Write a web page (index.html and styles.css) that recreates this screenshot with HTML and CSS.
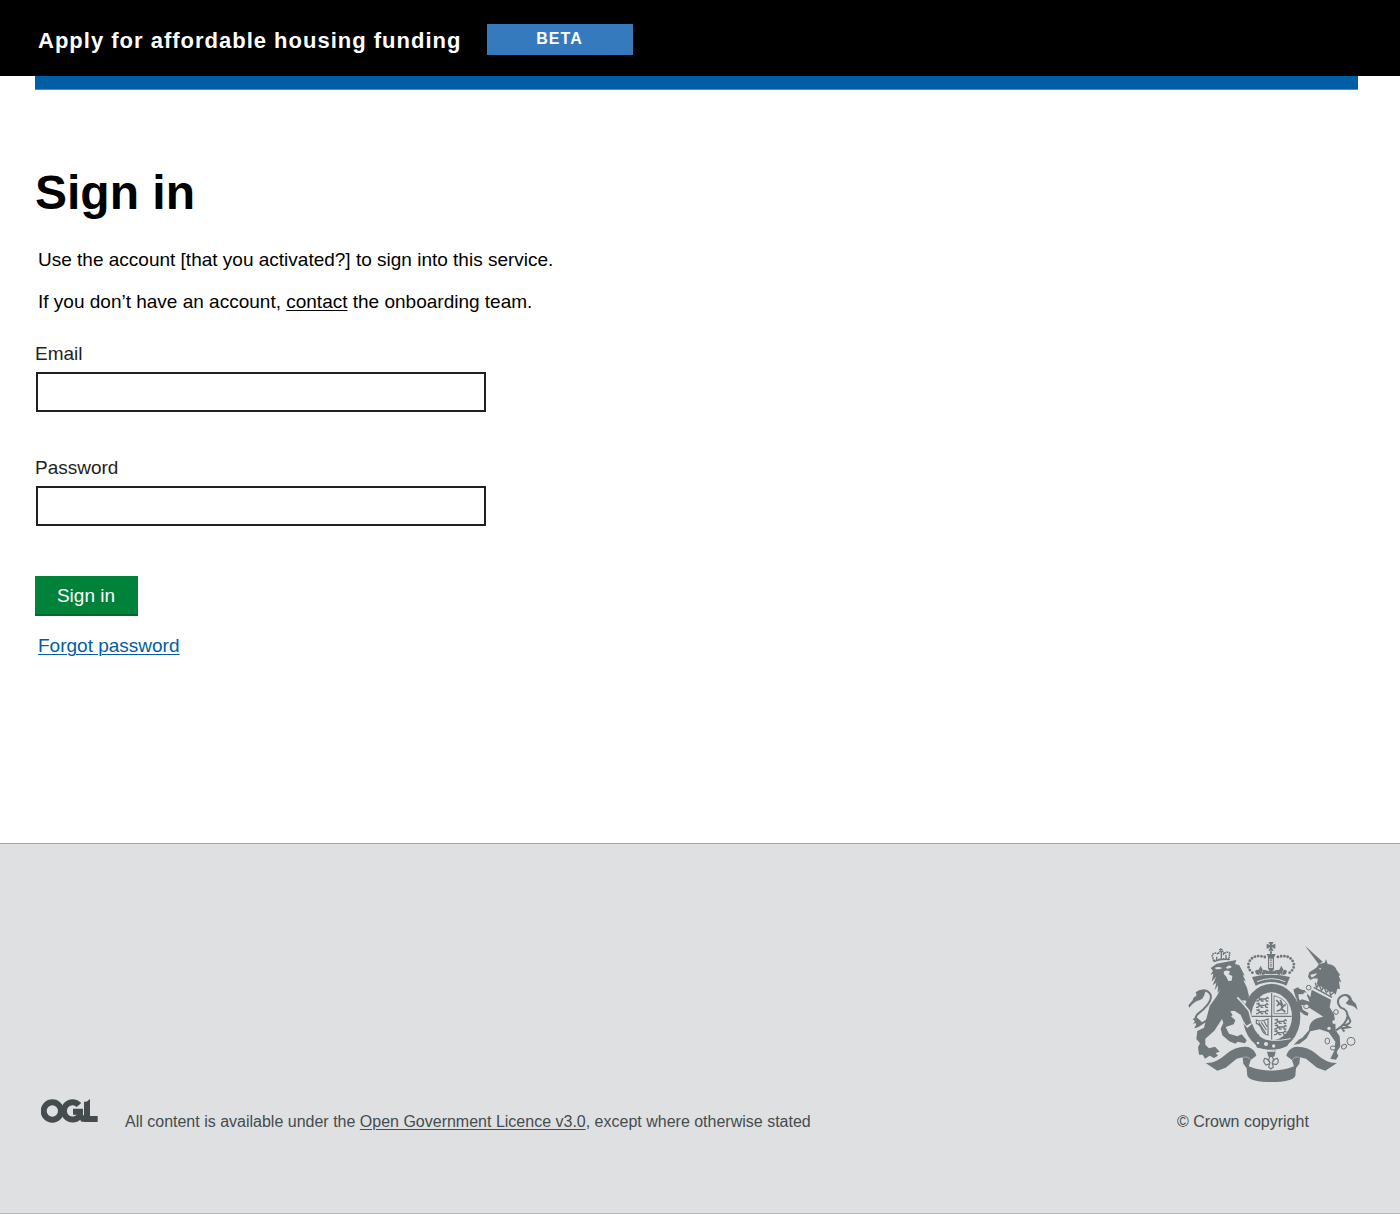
FILE: index.html
```html
<!DOCTYPE html>
<html lang="en">
<head>
<meta charset="utf-8">
<title>Sign in – Apply for affordable housing funding</title>
<link rel="stylesheet" href="styles.css">
</head>
<body>
<header class="header">
  <span class="service">Apply for affordable housing funding</span>
  <span class="phase">BETA</span>
</header>
<div class="header-bar"></div>
<main class="main">
  <h1 class="title">Sign in</h1>
  <p class="text">Use the account [that you activated?] to sign into this service.</p>
  <p class="text text-second">If you don’t have an account, <a class="contact" href="#">contact</a> the onboarding team.</p>
  <form class="form">
    <label class="label" for="email">Email</label>
    <input class="input" id="email" type="text">
    <label class="label" for="password">Password</label>
    <input class="input" id="password" type="password">
    <button class="button" type="button">Sign in</button>
  </form>
  <a class="forgot" href="#">Forgot password</a>
</main>
<footer class="footer">
  <div class="licence">
    <svg class="ogl" viewBox="0 0 171 72" role="img" aria-label="OGL">
      <g fill="none" stroke="#454c4f" stroke-width="18">
        <circle cx="34" cy="36" r="26"/>
        <path d="M114 18A26 26 0 1 0 117 49V38H96"/>
        <path d="M138 8V60H170"/>
      </g>
      <path fill="#454c4f" d="M109 49H129V68H121ZM129 14L147 0V15H129Z"/>
    </svg>
    <p class="small">All content is available under the <a class="ogl-link" href="#">Open Government Licence v3.0</a>, except where otherwise stated</p>
  </div>
  <div class="copyright">
    <svg class="crest" viewBox="0 0 540 465" role="img" aria-label="Royal coat of arms">
      <defs>
        <g id="walker" fill="none" stroke="#6f777b" stroke-width="4">
          <path d="M3 4L10 5L13 9H30L35 4L39 8M13 9L7 15H2M15 10L18 15H24M30 9L32 15H38M12 5L9 1"/>
        </g>
      </defs>
      <!-- garter and shield -->
      <ellipse cx="275" cy="246" rx="86" ry="100" fill="#6f777b"/>
      <ellipse cx="275" cy="244" rx="61" ry="72" fill="#dee0e2"/>
      <path d="M275 174V314M215 244H335" stroke="#6f777b" stroke-width="3.5"/>
      <use href="#walker" x="227" y="183"/><use href="#walker" x="226" y="202"/><use href="#walker" x="226" y="221"/>
      <use href="#walker" x="281" y="250"/><use href="#walker" x="281" y="267"/><use href="#walker" x="280" y="284"/>
      <path d="M282 182V236H323V211Q312 190 282 182" fill="none" stroke="#6f777b" stroke-width="2.5"/>
      <path d="M289 195L298 205L291 213M298 203L308 216L317 208M307 214L303 224L290 229M305 222L316 231M301 195L308 211" fill="none" stroke="#6f777b" stroke-width="5"/>
      <path d="M229 255Q242 262 264 252V300Q251 299 245 283Q241 269 229 265ZM236 262L257 295M244 262L259 285M252 259L261 275" fill="none" stroke="#6f777b" stroke-width="3.5"/>
      <!-- buckle -->
      <path d="M222 318L233 303L242 309L264 316L299 320L332 312L322 333L285 347L257 343L231 338Z" fill="#6f777b"/>
      <path d="M196 304Q207 326 228 339Q262 351 305 342M239 303Q265 325 332 311" fill="none" stroke="#dee0e2" stroke-width="3"/>
      <g fill="#dee0e2"><circle cx="234" cy="324" r="4"/><circle cx="258" cy="327" r="6"/><circle cx="281" cy="333" r="5"/></g>
      <!-- crown -->
      <path d="M216 126Q273 112 330 126L319 152Q274 130 227 152Z" fill="#6f777b"/>
      <path d="M231 140Q274 122 316 140" fill="none" stroke="#dee0e2" stroke-width="3"/>
      <path d="M217 113Q200 99 207 82Q219 55 258 67M329 113Q347 99 340 82Q328 55 289 67" fill="none" stroke="#6f777b" stroke-width="8.5" stroke-linecap="round" stroke-dasharray="0 10"/>
      <path d="M273 64V102" stroke="#6f777b" stroke-width="18"/>
      <path d="M273 71V99" stroke="#dee0e2" stroke-width="11"/>
      <path d="M273 73V97" stroke="#6f777b" stroke-width="4" stroke-dasharray="5 2"/>
      <path d="M265 21H281L275 31L286 26V42L275 36L281 47H265L271 36L260 42V26L271 31ZM260 57H287L283 66H264ZM270 49H276V56H270Z" fill="#6f777b"/>
      <path id="lys" d="M242 92L249 106L242 121L235 106ZM225 108Q235 99 239 111L238 121L228 117ZM259 108Q249 99 245 111L246 121L256 117Z" fill="#6f777b"/>
      <use href="#lys" x="62"/>
      <path d="M264 101H283L277 109L290 105V117L256 117V105L269 109Z" fill="#6f777b"/>
      <!-- lion -->
      <path d="M89 248Q67 268 55 268Q38 258 52 238Q99 203 92 180Q84 164 68 167" fill="none" stroke="#6f777b" stroke-width="6"/>
      <path d="M78 165Q60 160 47 172L50 181Q40 187 38 196L25 211L28 218Q43 199 58 196Q72 190 75 173ZM50 247L37 253L47 257L39 266L51 263L43 280Q57 278 70 265Z" fill="#6f777b"/>
      <path d="M171 185Q195 206 215 268L202 279L183 257L180 234L165 227Z" fill="#dee0e2"/>
      <path d="M92 99L110 86L169 75L165 87L178 91L187 108L194 122L188 119L197 139L190 136L201 158L207 184L202 198L186 195L203 220L213 263L199 271L190 258L182 239L163 227L151 229L158 241L153 244L166 256L161 268L137 276L147 296L172 304L185 298L200 316L195 325L173 320L166 326L148 319L127 301L122 281L130 264L126 252L103 287L76 311L76 329L87 340L105 335L119 350L107 354L114 362L102 369L89 362L75 371L68 359L57 359L54 337L60 325L49 312L52 288L72 278L82 240L89 213L110 184L122 162L113 174L114 151L104 166L109 143L98 151L108 125L95 140L100 116L91 119L99 108Z" fill="#6f777b"/>
      <path d="M104 99Q115 93 127 99Q117 105 108 102M138 97L148 91L156 96Q149 101 141 101M131 110Q140 103 150 110L146 118L157 123L155 137L145 138L139 125L132 118Z" fill="#dee0e2"/>
      <path d="M172 187Q191 206 207 227L218 267" fill="none" stroke="#dee0e2" stroke-width="5"/>
      <path d="M192 253L205 252L214 263L199 272Z" fill="#6f777b"/>
      <path d="M101 78L96 59Q106 50 115 58Q117 48 124 48Q131 48 131 57Q142 48 149 54L147 72Q123 69 101 78" fill="none" stroke="#6f777b" stroke-width="5" stroke-dasharray="5 2"/>
      <path d="M101 80Q123 71 148 74M110 65V74M124 48V72M138 60V70M117 44H128M122 40V46" fill="none" stroke="#6f777b" stroke-width="4"/>
      <!-- unicorn -->
      <path d="M375 32L428 80L416 88Z" fill="#6f777b"/>
      <path d="M384 125L388 112L409 98L417 87L434 83L438 73L443 87Q464 89 470 105L481 121L476 122L484 142L477 139L480 162L472 161L467 179L459 170L448 172L409 153L414 131L402 130L391 135Z" fill="#6f777b"/>
      <path d="M391 119L412 115L407 121L395 128M416 101L424 98L421 104Z" fill="#dee0e2"/>
      <path d="M405 145L464 177L458 190L400 159Z" fill="#dee0e2"/>
      <path d="M401 157L456 187M406 143L410 158L416 148L425 166L431 155L439 172L447 164L452 180L463 171" fill="none" stroke="#6f777b" stroke-width="4"/>
      <path d="M395 164L453 194L449 217L462 238L466 263L467 286L479 304L481 334L470 351L475 363L468 374L451 371L463 347L466 320L446 292L419 283L391 289L380 310L359 326L341 329L356 314L367 308L387 286Q386 251 430 245L395 223L376 211L364 210L369 225L386 236L374 240L357 227L350 202L366 193L389 200L379 177L355 178L358 199L347 187L341 167L350 161L374 166L391 187Z" fill="#6f777b"/>
      <path d="M339 164L353 157L367 167L351 174ZM348 190L361 195L354 204ZM369 225L385 234L383 243L371 238Z" fill="#6f777b"/>
      <path d="M468 286Q502 265 503 241Q502 224 482 218Q467 201 479 187Q499 172 511 190M500 235L511 258Q511 266 495 271L507 277L486 280L493 290" fill="none" stroke="#6f777b" stroke-width="6"/>
      <path d="M495 178Q514 178 516 195L528 207L533 226Q522 211 507 211L497 205L507 193Z" fill="#6f777b"/>
      <!-- chain -->
      <g fill="#dee0e2" stroke="#6f777b" stroke-width="3"><circle cx="386" cy="158" r="7"/><ellipse cx="379" cy="214" rx="8" ry="7"/><circle cx="468" cy="231" r="7"/><ellipse cx="442" cy="318" rx="7" ry="9"/><ellipse cx="459" cy="339" rx="8" ry="6"/><ellipse cx="492" cy="335" rx="8" ry="6" transform="rotate(-35 492 335)"/><circle cx="513" cy="319" r="12"/></g>
      <g fill="#dee0e2"><circle cx="463" cy="261" r="6"/><circle cx="447" cy="280" r="5"/><circle cx="376" cy="178" r="6"/></g>
      <!-- motto ribbon and rose stem -->
      <path id="ribbon" d="M77 384Q107 386 139 357Q169 332 205 336Q224 343 229 362L212 375L206 394Q238 407 275 407V441Q212 441 202 423L200 400L190 386L188 367L170 371L137 398L112 407Z" fill="#6f777b"/>
      <use href="#ribbon" transform="translate(548 0) scale(-1 1)"/>
      <path d="M190 367Q204 363 211 374M358 367Q344 363 337 374" fill="none" stroke="#dee0e2" stroke-width="1.5"/>
      <path d="M261 350H287L283 365H265Z" fill="#6f777b"/>
      <path d="M273 360L281 373L276 384Q283 370 292 370Q299 380 289 389L277 386L280 396L273 402L266 396L269 386L258 390Q247 380 254 370Q263 370 270 384L266 373Z" fill="#dee0e2" stroke="#6f777b" stroke-width="3.5"/>
    </svg>
    <p class="small">© Crown copyright</p>
  </div>
</footer>
</body>
</html>
```
FILE: styles.css
```css
* { box-sizing: border-box; }
body {
  margin: 0;
  background: #fff;
  color: #000;
  font-family: "Liberation Sans", Arial, sans-serif;
  font-size: 19px;
}
p, h1 { margin: 0; }
.header {
  display: flex;
  align-items: flex-start;
  height: 76px;
  padding: 24px 38px 0;
  background: #000;
  color: #fff;
  gap: 25px;
}
.service {
  width: 424px;
  font-size: 22px;
  font-weight: 700;
  line-height: 33px;
  letter-spacing: 1px;
  white-space: nowrap;
}
.phase {
  width: 146px;
  height: 31px;
  padding-right: 1px;
  background: #347abc;
  font-size: 16px;
  font-weight: 700;
  line-height: 30px;
  letter-spacing: 1px;
  text-align: center;
}
.header-bar {
  height: 14px;
  margin: 0 42px 0 35px;
  background: #005ea5;
  border-bottom: 1px solid #4d8ec0;
}
.main {
  height: 753px;
  padding: 73px 35px 0;
}
.title {
  font-size: 48px;
  line-height: 60px;
}
.text {
  margin: 25px 0 0 3px;
  line-height: 24px;
}
.text-second { margin-top: 18px; }
.contact { color: #000; text-underline-offset: 2px; text-decoration-thickness: 1px; }
.form {
  display: flex;
  flex-direction: column;
  align-items: flex-start;
  margin-top: 28px;
}
.label {
  line-height: 24px;
  color: #231f20;
}
.input {
  width: 450px;
  height: 40px;
  margin: 6px 0 44px 1px;
  border: 2px solid #231f20;
  border-radius: 0;
  background: #fff;
}
.button {
  width: 103px;
  height: 40px;
  margin-top: 6px;
  padding: 2px 1px 0 0;
  border: 0;
  border-bottom: 2px solid #00692f;
  background: #00823b;
  color: #fff;
  font: inherit;
}
.forgot {
  display: inline-block;
  margin: 18px 0 0 3px;
  color: #005ea5;
  line-height: 24px;
  text-underline-offset: 2px;
  text-decoration-thickness: 1px;
}
.footer {
  display: flex;
  justify-content: space-between;
  align-items: flex-end;
  height: 371px;
  padding: 0 40px 81px 41px;
  border-top: 1px solid #a1a4a6;
  border-bottom: 1px solid #b5b7b9;
  background: #dee0e2;
  color: #454c4f;
  font-size: 16px;
}
.licence { display: flex; align-items: flex-end; gap: 27px; }
.ogl { width: 57px; height: 24px; margin-bottom: 9px; }
.small { line-height: 20px; }
.ogl-link { color: inherit; text-underline-offset: 2px; text-decoration-thickness: 1px; }
.copyright { width: 183px; }
.crest { display: block; width: 180px; height: 155px; margin: 0 0 22px 3px; }
```
